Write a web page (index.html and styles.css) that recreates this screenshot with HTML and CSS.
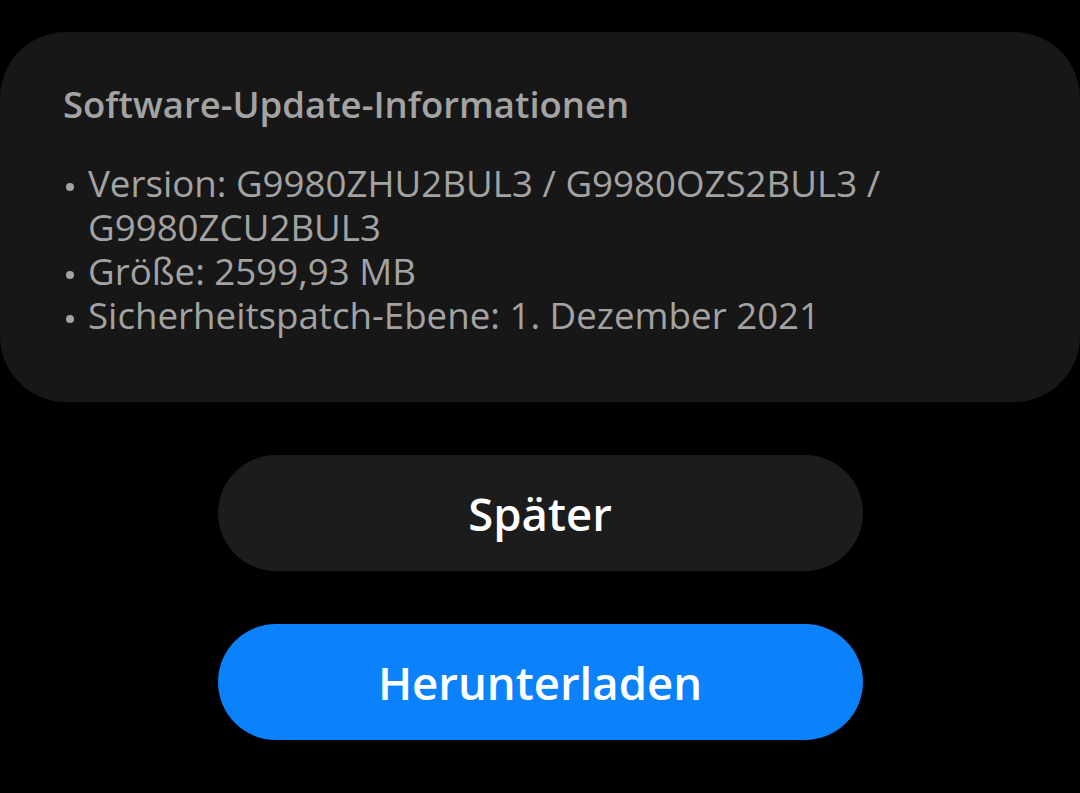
FILE: index.html
```html
<!DOCTYPE html>
<html lang="de">
<head>
  <meta charset="UTF-8" />
  <meta name="viewport" content="width=device-width, initial-scale=1.0"/>
  <title>Software-Update</title>
  <link rel="stylesheet" href="styles.css">
</head>
<body>
  <div class="info-card">
    <div class="info-title">Software-Update-Informationen</div>
    <ul class="info-list">
      <li>Version: G9980ZHU2BUL3 / G9980OZS2BUL3 /<br>G9980ZCU2BUL3</li>
      <li>Größe: 2599,93 MB</li>
      <li>Sicherheitspatch-Ebene: 1. Dezember 2021</li>
    </ul>
  </div>

  <div class="actions">
    <button class="btn later">Später</button>
    <button class="btn download">Herunterladen</button>
  </div>
</body>
</html>
```

FILE: styles.css
```css
body {
  background-color: #000;
  margin: 0;
  font-family: 'Open Sans', Roboto, sans-serif;
  height: 793px;
  overflow: hidden;
}
.info-card {
  margin-top: 32px;
  height: 370px;
  box-sizing: border-box;
  background-color: #171717;
  border-radius: 66px;
  padding: 50px 40px 0 63px;
  color: #a3a3a3;
}
.info-title {
  font-size: 36.5px;
  font-weight: 600;
  line-height: 44px;
  margin-bottom: 35px;
}
.info-list {
  list-style: none;
  margin: 0;
  padding: 0;
  font-size: 36.7px;
  line-height: 44px;
}
.info-list li {
  position: relative;
  padding-left: 25px;
}
.info-list li::before {
  content: '';
  position: absolute;
  left: 3px;
  top: 22px;
  width: 8px;
  height: 8px;
  border-radius: 50%;
  background-color: #a3a3a3;
}
.actions {
  display: flex;
  flex-direction: column;
  align-items: center;
  gap: 53px;
  margin-top: 53px;
}
.btn {
  width: 645px;
  height: 116px;
  border: none;
  border-radius: 58px;
  font-family: inherit;
  font-size: 45.5px;
  font-weight: 600;
  color: #fff;
  cursor: pointer;
}
.btn.later {
  background-color: #1c1c1c;
}
.btn.download {
  background-color: #0b82fb;
}
```
